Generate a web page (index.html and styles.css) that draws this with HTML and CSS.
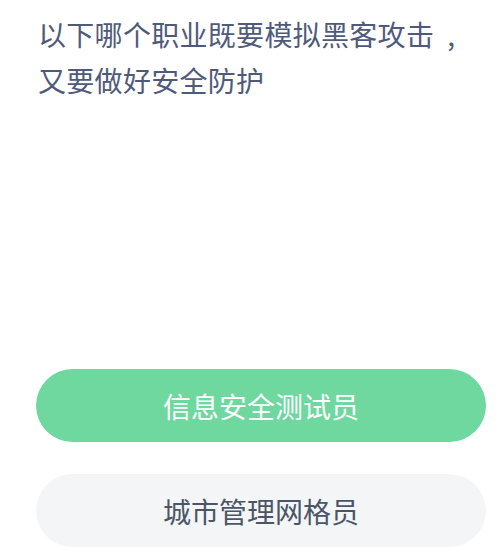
FILE: index.html
```html
<!DOCTYPE html>
<html lang="zh-CN">
<head>
<meta charset="utf-8">
<link rel="stylesheet" href="styles.css">
</head>
<body>
<div class="page">
  <div class="question">以下哪个职业既要模拟黑客攻击<span class="comma">,</span><br>又要做好安全防护</div>
  <div class="options">
    <div class="option option-selected">信息安全测试员</div>
    <div class="option">城市管理网格员</div>
  </div>
</div>
</body>
</html>
```
FILE: styles.css
```css
html, body {
  margin: 0;
  padding: 0;
  background: #ffffff;
}
.page {
  width: 499px;
  height: 555px;
  overflow: hidden;
  padding: 11px 13px 0 36px;
  box-sizing: border-box;
  font-family: "Noto Sans CJK SC", "Noto Sans", sans-serif;
}
.question {
  padding-left: 2px;
  font-size: 28px;
  line-height: 46px;
  letter-spacing: 0.3px;
  color: #4f5a7b;
  white-space: nowrap;
}
.comma {
  margin-left: 13px;
}
.options {
  margin-top: 266px;
  display: flex;
  flex-direction: column;
  gap: 32px;
}
.option {
  height: 73px;
  border-radius: 37px;
  background: #f4f5f7;
  color: #4b5568;
  font-size: 28px;
  display: flex;
  align-items: center;
  justify-content: center;
}
.option-selected {
  background: #6ed89f;
  color: #ffffff;
}
```
